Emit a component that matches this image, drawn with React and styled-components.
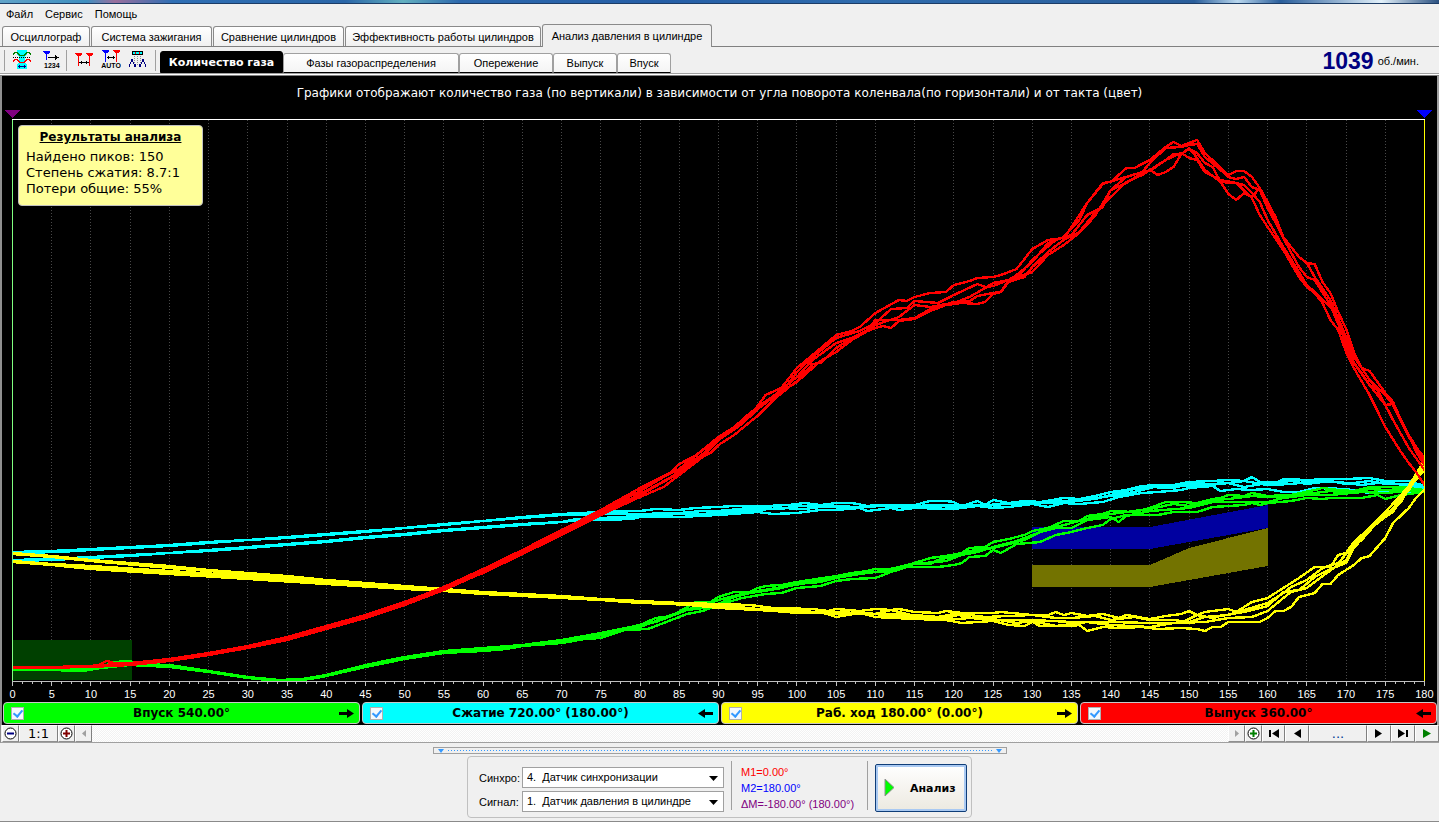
import React, { useState } from "react";
import styled, { createGlobalStyle } from "styled-components";

const GlobalStyle = createGlobalStyle`
  * {
    box-sizing: border-box;
  }
  body {
    margin: 0;
    background: #f0f0f0;
    color: #000;
    font-family: "Liberation Sans", Arial, sans-serif;
    font-size: 11px;
  }
  button, select, input {
    font: inherit;
    color: inherit;
    margin: 0;
  }
  svg {
    display: block;
    flex: none;
  }
`;

const Window = styled.div`
  display: flex;
  flex-direction: column;
  height: 100vh;
  min-height: 560px;
  border-bottom: 1px solid #8a8a8a;
`;

const Glass = styled.div`
  height: 4px;
  flex: none;
  border-bottom: 1px solid #1c3c66;
  background: linear-gradient(
    90deg,
    #5fa3c9 0%,
    #3e8fc0 6%,
    #9a6f9c 8%,
    #2f6fb5 12%,
    #2a66a8 24%,
    #63b0c0 28%,
    #2c68ad 32%,
    #255ea6 46%,
    #2f6cae 60%,
    #2a5e9b 83%,
    #b9d7ee 86%,
    #2a5e9b 89%,
    #e3f1fa 96%,
    #2a5080 100%
  );
`;

const Menu = styled.nav`
  display: flex;
  flex: none;
  gap: 12px;
  height: 20px;
  padding-left: 6px;
`;

const MenuItem = styled.button`
  padding: 0;
  border: 0;
  background: none;
  line-height: 18px;
`;

const Tabs = styled.div`
  display: flex;
  flex: none;
  align-items: flex-end;
  gap: 1px;
  height: 23px;
  padding-left: 2px;
  border-bottom: 1px solid #808080;
`;

const Tab = styled.button`
  width: ${(p) => p.$width}px;
  height: ${(p) => (p.$active ? 23 : 20)}px;
  margin-bottom: ${(p) => (p.$active ? -1 : 0)}px;
  padding: 0;
  border: 1px solid #8a8a8a;
  border-bottom: 0;
  border-radius: 3px 3px 0 0;
  background: ${(p) =>
    p.$active ? "#f0f0f0" : "linear-gradient(#fff, #f0f0f0)"};
  white-space: nowrap;
`;

const Toolbar = styled.div`
  display: flex;
  flex: none;
  height: 29px;
  border-bottom: 1px solid #808080;
  box-shadow: inset 0 -1px #fff, inset 0 -2px #a0a0a0;
`;

const Tools = styled.div`
  display: flex;
  align-items: flex-start;
  width: 160px;
  padding: 3px 0 0 4px;
`;

const Divider = styled.span`
  width: 1px;
  height: ${(p) => p.$height}px;
  background: #a0a0a0;
`;

const Tool = styled.button`
  width: ${(p) => p.$width}px;
  height: 20px;
  padding: 0;
  border: 0;
  background: none;
  display: flex;
  justify-content: center;
`;

const SubTabs = styled.div`
  display: flex;
  align-items: flex-end;
  height: 26px;
`;

const SubTab = styled.button`
  width: ${(p) => p.$width}px;
  height: ${(p) => (p.$active ? 22 : 20)}px;
  padding: 0;
  border: 1px solid ${(p) => (p.$active ? "#000" : "#a0a0a0")};
  border-bottom-color: #000;
  border-radius: 3px 3px 0 0;
  background: ${(p) => (p.$active ? "#000" : "linear-gradient(#fff, #f4f4f4)")};
  color: ${(p) => (p.$active ? "#fff" : "#000")};
  font-family: ${(p) =>
    p.$active ? '"DejaVu Sans", Verdana, sans-serif' : "inherit"};
  font-weight: ${(p) => (p.$active ? "bold" : "normal")};
  white-space: nowrap;
`;

const Rpm = styled.div`
  display: flex;
  align-items: center;
  gap: 4px;
  margin-left: auto;
  padding-right: 20px;
`;

const RpmValue = styled.strong`
  color: #000080;
  font-size: 23px;
`;

const Chart = styled.main`
  display: flex;
  flex: 1 1 0;
  flex-direction: column;
  min-height: 0;
  border-left: 2px solid #909090;
  border-right: 2px solid #a0a0a0;
  background: #000;
  color: #fff;
`;

const ChartTitle = styled.h1`
  flex: none;
  height: 34px;
  margin: 0;
  font: 12px/34px "DejaVu Sans", Verdana, sans-serif;
  text-align: center;
`;

const Markers = styled.div`
  display: flex;
  flex: none;
  justify-content: space-between;
  margin: 0 5px 0 3px;
  padding-bottom: 1px;
`;

const PlotArea = styled.div`
  position: relative;
  display: grid;
  flex: 1 1 0;
  min-height: 0;
  margin: 0 12px 0 10px;
`;

const Plot = styled.svg`
  width: 100%;
  height: 100%;
  min-height: 0;
`;

const Ticks = styled.svg`
  height: 5px;
  width: calc(100% - 22px);
  margin: 0 12px 0 10px;
`;

const Scale = styled.div`
  display: flex;
  flex: none;
  justify-content: space-between;
  height: 15px;
  margin: 0 12px 0 10px;
  line-height: 14px;
`;

const ScaleLabel = styled.span`
  display: flex;
  justify-content: center;
  width: 1px;
`;

const Results = styled.section`
  position: absolute;
  left: 6px;
  top: 6px;
  width: 185px;
  height: 81px;
  padding: 3px 7px;
  border: 1px solid #c0c0c0;
  border-radius: 4px;
  background: #ffff99;
  color: #000;
  font: 13px/16px "DejaVu Sans", Verdana, sans-serif;
  white-space: nowrap;
`;

const ResultsTitle = styled.h2`
  margin: 0 0 4px;
  font-size: 12px;
  line-height: 16px;
  text-align: center;
  text-decoration: underline;
`;

const Strokes = styled.div`
  display: grid;
  flex: none;
  grid-template-columns: repeat(4, 1fr);
  gap: 2px;
  height: 23px;
  padding: 0 0 1px 1px;
`;

const Stroke = styled.label`
  display: flex;
  align-items: center;
  padding: 0 5px 0 7px;
  border: 1px solid #c8c8c8;
  border-radius: 4px;
  background: ${(p) => p.$color};
  color: #000;
  font: bold 12px "DejaVu Sans", Verdana, sans-serif;
`;

const StrokeName = styled.span`
  flex: 1;
  text-align: center;
`;

const Tick = styled.input`
  appearance: none;
  width: 13px;
  height: 13px;
  border: 1px solid #b0b0b0;
  background: #f4f8fc;
  &:checked::before {
    content: "";
    display: block;
    width: 4px;
    height: 7px;
    margin: 0 0 0 3px;
    border: solid #3399ff;
    border-width: 0 2px 2px 0;
    transform: rotate(40deg);
  }
`;

const ScrollRow = styled.div`
  display: flex;
  flex: none;
  height: 18px;
  padding-left: 1px;
  border-left: 1px solid #909090;
  border-bottom: 1px solid #a0a0a0;
  background: #f0f0f0;
`;

const Small = styled.button`
  display: flex;
  align-items: center;
  justify-content: center;
  width: ${(p) => p.$width}px;
  padding: 0;
  border: 1px solid;
  border-color: #fff #808080 #909090 #fff;
  background: #f0f0f0;
  color: ${(p) => p.$color || "#000"};
  font: 13px/15px "DejaVu Sans", Verdana, sans-serif;
`;

const Track = styled.div`
  flex: 1;
  background: repeating-conic-gradient(#fff 0 25%, #f2f2f2 0 50%) 0 0 / 2px 2px;
`;

const Footer = styled.footer`
  display: flex;
  flex: none;
  flex-direction: column;
  align-items: center;
  height: 78px;
  padding-top: 4px;
`;

const Splitter = styled.button`
  display: flex;
  align-items: center;
  justify-content: space-between;
  gap: 4px;
  width: 574px;
  height: 7px;
  padding: 0 4px;
  border: 1px solid #a0a0a0;
  background: #f0f0f0;
`;

const Dots = styled.span`
  flex: 1;
  height: 1px;
  background: repeating-linear-gradient(90deg, #3399ff 0 1px, transparent 1px 3px);
`;

const Panel = styled.form`
  display: flex;
  height: 62px;
  margin-top: 2px;
  padding: 4px 4px 0 11px;
  border: 1px solid #c0c0c0;
  border-radius: 4px;
`;

const Fields = styled.div`
  display: grid;
  grid-template-columns: 43px 202px;
  grid-auto-rows: 21px;
  row-gap: 3px;
  align-items: center;
  margin-right: 7px;
  padding-top: 6px;
`;

const SelectBox = styled.div`
  position: relative;
`;

const Select = styled.select`
  appearance: none;
  display: block;
  width: 100%;
  height: 21px;
  padding: 0 20px 1px 4px;
  border: 1px solid #a0a0a0;
  border-radius: 0;
  background: #fff;
`;

const Caret = styled.svg`
  position: absolute;
  right: 6px;
  top: 9px;
  pointer-events: none;
`;

const Values = styled.div`
  width: 135px;
  padding: 3px 0 0 9px;
  line-height: 16px;
  white-space: nowrap;
`;

const Value = styled.div`
  color: ${(p) => p.$color};
`;

const Analyse = styled.button`
  display: flex;
  align-items: center;
  gap: 14px;
  width: 92px;
  height: 48px;
  margin: 3px 0 0 7px;
  padding: 0 0 0 8px;
  border: 1px solid #0f3d78;
  border-radius: 2px;
  background: linear-gradient(#fff, #ece9e0);
  box-shadow: inset 0 0 0 2px #a9c9f2;
  font-family: "DejaVu Sans", Verdana, sans-serif;
  font-weight: bold;
`;

const tabs = [
  ["Осциллограф", 88],
  ["Система зажигания", 121],
  ["Сравнение цилиндров", 131],
  ["Эффективность работы цилиндров", 196],
  ["Анализ давления в цилиндре", 170],
];

const subTabs = [
  ["Количество газа", 123],
  ["Фазы газораспределения", 176],
  ["Опережение", 94],
  ["Выпуск", 64],
  ["Впуск", 54],
];

const strokes = [
  { name: "Впуск 540.00°", color: "#00ff00", back: false },
  { name: "Сжатие 720.00° (180.00°)", color: "#00ffff", back: true },
  { name: "Раб. ход 180.00° (0.00°)", color: "#ffff00", back: false },
  { name: "Выпуск 360.00°", color: "#ff0000", back: true },
];

// plot scale: crank angle 0..180 over 1412 units, samples counted from TOP down
const TOP = 119;
const HEIGHT = 563;
const WIDTH = 1413;
const toX = (deg) => (deg * 1412) / 180 + 0.5;

// each trace is "angle value" pairs
const cyan = [
  "0 552 5 551 10 549 15 547 20 545 25 542 30 540 35 537 40 534 45 531 50 528 55 524 60 521 65 517 70 514 75 512 80 511 82 509 85 510 87 508 90 507 92 506 96 506 99 505 101 503 103 505 105 503 107 503 109 506 112 505 115 505 117 501 119 501 120 502 121 506 123 501 124 505 125 500 127 503 129 501 131 502 134 498 136 499 138 496 140 492 142 490 144 486 146 485 148 485 150 482 153 481 155 480 157 481 158 477 159 482 161 483 162 479 165 480 168 479 170 479 173 478 175 481 178 481 180 486",
  "0 553 6 552 10 550 15 548 20 546 25 543 30 540 35 538 40 535 45 532 50 528 55 525 60 521 65 518 70 515 75 514 80 514 85 513 88 511 90 511 94 508 98 509 100 506 104 507 107 508 110 505 114 507 117 505 120 505 123 505 125 508 126 504 130 503 133 503 135 501 138 499 140 495 143 489 145 487 148 488 150 484 153 484 155 483 157 487 160 483 163 481 165 484 168 481 170 484 173 481 175 484 178 484 180 488",
  "0 560 5 559 10 557 15 555 20 553 25 550 30 547 35 544 40 541 45 537 50 534 55 530 60 527 65 524 70 522 75 518 80 516 85 514 88 514 91 512 95 510 98 508 101 509 104 506 108 507 111 506 115 508 118 506 121 507 124 505 127 504 130 504 133 501 136 501 139 497 141 495 143 492 146 486 149 486 152 485 154 484 157 481 160 485 163 484 166 481 169 482 172 485 175 482 178 486 180 489",
  "0 561 5 560 10 558 15 556 20 553 25 551 30 548 35 545 40 542 45 538 50 535 55 531 60 528 65 525 70 522 72 519 75 520 79 519 80 517 85 517 90 515 95 512 97 514 100 513 103 510 105 510 108 508 109 511 112 508 113 510 115 508 120 509 123 506 125 508 127 507 130 504 132 507 134 503 136 504 139 502 141 497 144 493 146 492 149 490 150 488 153 486 154 491 156 489 158 490 160 489 162 492 164 492 166 488 170 489 173 493 175 491 178 493 180 490",
];

const green = [
  "0 669 5 669 9 669 11 667 12 665 13 662 15 661 16 664 20 665 25 671 30 677 34 680 37 679 40 675 45 665 50 657 55 651 60 648 65 645 70 640 75 633 80 625 82 618 84 616 86 607 87 602 89 602 90 597 92 592 94 592 95 588 96 586 98 585 100 582 105 576 107 573 109 571 110 569 112 570 113 567 115 563 117 558 119 556 121 553 122 548 124 547 125 542 127 539 129 535 130 531 132 528 134 521 136 521 137 516 139 514 140 511 143 512 145 508 147 502 149 502 151 503 153 499 154 498 155 495 157 496 158 493 160 496 163 495 166 490 167 488 169 490 171 491 173 487 177 487 180 490",
  "0 669 5 670 10 669 13 663 15 662 17 664 20 666 25 671 30 677 34 681 37 680 40 676 45 666 50 658 55 652 60 650 65 646 70 641 75 635 80 627 85 612 88 605 90 600 93 594 95 592 98 588 100 584 103 582 105 578 108 574 110 572 115 564 119 561 121 555 123 552 125 547 128 541 130 535 133 527 135 523 137 519 140 514 143 511 145 509 148 504 150 506 153 500 155 499 158 496 160 497 163 497 165 494 168 491 170 493 173 489 175 490 178 489 180 490",
  "0 670 5 670 9 671 12 667 14 664 16 665 20 666 25 672 30 678 34 680 38 679 40 676 45 667 50 659 55 652 60 650 65 646 70 642 74 637 78 629 82 622 86 610 89 607 92 597 95 591 99 586 102 582 105 577 109 572 112 572 115 563 117 564 118 560 120 556 122 551 125 548 127 544 129 540 131 532 133 528 135 528 137 520 140 517 141 522 142 516 145 511 150 508 153 502 155 502 160 502 162 498 165 495 168 495 172 492 175 493 178 491 180 490",
  "0 669 10 669 15 665 20 667 25 672 30 678 34 681 37 680 40 676 45 667 50 659 55 653 60 651 63 649 65 646 70 643 73 639 75 638 78 630 81 629 83 623 86 614 88 611 90 605 93 598 96 594 98 593 100 588 103 586 105 581 107 579 110 578 112 572 114 567 118 567 120 565 121 563 122 557 124 556 125 550 126 553 128 544 131 542 133 535 135 532 137 528 139 525 140 519 142 515 146 515 148 512 151 512 153 507 157 505 158 503 159 505 160 503 163 501 165 498 167 499 168 498 172 498 174 495 175 499 177 495 180 492",
];

const yellow = [
  "0 553 5 556 10 560 15 563 20 566 25 570 30 573 35 576 40 580 45 583 50 586 55 589 60 592 65 594 70 596 75 599 80 601 85 603 90 604 94 605 97 608 102 609 104 611 105 609 108 611 110 609 112 610 113 609 115 612 118 613 119 611 121 613 123 613 125 613 126 612 130 615 132 615 133 612 134 615 135 613 137 616 139 614 141 618 142 615 145 619 147 616 149 614 150 611 151 615 152 612 155 609 156 612 158 602 160 598 162 588 164 578 166 567 168 567 169 555 170 553 171 542 173 528 175 512 177 495 178 486 180 460",
  "0 554 5 557 10 561 20 568 30 574 40 581 50 587 55 590 60 592 65 595 70 597 75 600 80 602 85 604 90 605 95 609 100 611 105 613 110 614 112 610 115 616 119 618 121 614 124 617 127 616 130 615 133 618 135 618 138 616 140 620 143 617 145 620 148 620 150 622 152 617 155 615 157 610 160 603 162 593 163 587 165 580 167 568 169 563 171 545 172 540 174 522 176 508 177 498 178 490 180 465",
  "0 561 5 564 10 566 20 571 30 576 40 582 50 587 55 590 60 593 70 597 78 601 85 604 90 606 95 609 100 613 105 612 110 614 115 615 118 617 120 614 123 619 126 620 130 620 135 622 140 622 145 623 149 623 151 615 153 618 154 616 157 612 160 606 162 592 164 590 166 577 168 569 170 563 171 548 173 530 175 516 177 502 178 488 180 470",
  "0 562 5 565 10 569 20 574 30 579 40 584 50 589 55 591 60 594 70 598 80 602 90 607 100 611 105 614 108 612 112 616 116 617 119 620 122 618 125 619 128 623 130 621 133 626 137 622 140 625 145 627 148 623 152 622 155 618 158 617 160 611 162 598 163 592 165 588 167 576 169 565 170 560 171 546 173 529 175 517 176 512 177 500 180 466",
  "0 562 10 568 20 573 30 578 40 583 50 588 60 593 70 597 80 603 85 604 90 608 95 610 99 612 100 613 103 612 105 617 108 613 110 617 115 619 119 620 121 623 123 622 125 621 127 625 129 626 130 622 131 626 135 626 136 625 137 631 139 627 141 628 144 627 146 629 149 628 151 629 152 631 153 627 154 627 155 622 159 622 160 618 161 611 162 611 163 607 164 597 166 593 167 584 168 584 169 575 171 565 172 558 173 556 174 547 175 538 176 523 178 508 179 497 180 490",
];

const red = [
  "0 667 5 667 10 666 15 663 20 659 25 653 30 646 35 637 40 626 45 615 50 602 55 587 60 569 65 550 70 530 75 510 80 488 84 472 85 464 87 456 90 437 93 422 95 406 96 395 98 388 100 368 102 355 105 335 107 331 108 327 110 313 113 300 114 301 115 297 117 293 119 292 120 285 122 281 123 278 125 277 126 275 128 269 130 249 132 240 134 238 135 227 137 203 139 183 140 182 142 168 143 168 145 160 147 147 148 142 149 146 150 143 151 140 152 153 155 175 156 171 157 171 158 177 159 188 160 202 161 217 162 237 164 257 165 263 166 264 167 282 168 293 169 312 170 329 171 352 172 368 173 371 174 382 175 393 176 402 177 420 178 435 179 448 180 458",
  "0 667 10 667 15 664 20 660 25 654 30 647 35 638 40 627 45 616 50 603 55 588 60 570 65 551 70 532 75 512 80 491 83 477 85 469 88 450 90 440 93 424 95 406 98 393 100 372 102 357 105 338 108 331 110 323 112 309 114 308 115 301 118 303 120 295 123 284 124 287 125 286 127 280 128 275 130 262 132 243 134 237 136 220 137 203 139 184 141 179 142 177 144 172 145 163 147 148 149 147 150 145 151 144 152 157 154 170 155 177 156 179 157 177 158 187 159 190 160 208 162 237 164 257 165 263 166 277 168 300 170 337 171 357 172 368 173 380 174 388 175 395 176 405 178 437 180 463",
  "0 668 6 668 10 666 11 665 12 661 13 663 15 664 20 660 25 654 30 647 35 639 40 628 45 617 50 604 55 589 60 572 65 553 70 533 75 514 80 494 84 477 86 465 88 454 90 440 92 427 94 413 97 396 100 377 102 360 105 343 107 338 109 330 110 325 113 317 115 305 117 307 119 304 120 303 122 297 124 288 125 283 127 280 128 278 130 260 131 253 133 240 135 235 137 215 139 207 140 190 142 177 144 172 145 171 147 160 148 154 149 154 150 149 151 153 152 163 153 167 154 182 155 194 156 200 157 193 158 197 159 188 160 207 162 238 164 267 165 277 166 280 168 305 170 343 171 363 172 373 173 385 175 405 176 404 177 420 178 435 179 453 180 465",
  "0 668 10 667 12 666 15 665 20 661 25 655 30 648 35 639 40 629 45 618 50 605 55 590 60 571 65 552 70 534 75 515 80 495 85 473 88 457 90 440 93 424 95 409 97 397 100 382 103 361 105 352 107 340 109 331 110 328 111 326 112 328 113 321 115 319 117 311 119 305 121 303 123 304 124 302 125 294 126 292 127 282 129 277 130 267 132 252 134 240 136 232 138 213 140 197 142 182 144 175 145 170 146 175 147 172 148 167 149 154 150 148 151 158 152 170 154 182 156 183 157 185 158 193 159 202 160 220 162 247 164 272 165 285 166 292 168 307 169 317 170 347 171 363 173 385 174 390 175 405 176 420 178 448 180 470",
  "0 668 10 667 15 665 20 661 25 655 30 648 35 640 40 629 45 618 50 605 55 590 59 576 60 573 65 554 70 535 75 515 80 497 83 487 85 475 88 457 89 453 90 445 92 435 94 422 95 416 97 400 99 387 100 381 102 364 103 363 105 348 107 338 109 330 110 320 113 320 115 318 117 309 120 302 122 301 123 296 125 293 126 292 127 280 130 272 132 255 134 245 136 233 138 216 140 190 142 183 144 173 145 170 147 160 149 153 150 158 151 160 152 172 154 180 156 183 158 198 159 215 160 227 162 250 164 277 165 287 166 293 167 303 168 320 169 330 170 352 171 368 173 395 175 427 177 452 178 463 179 473 180 485",
];

const series = [
  { color: "#00ffff", traces: cyan },
  { color: "#00ff00", traces: green },
  { color: "#ffff00", traces: yellow },
  { color: "#ff0000", traces: red },
];

const zones = [
  { color: "#004000", points: "0 640 15.2 640 15.2 680 0 680" },
  { color: "#0000a0", points: "130 527 145 527 160 505 160 528 145 549 130 549" },
  {
    color: "#737300",
    points: "130 565 145 565 150 548 160 528 160 566 145 587 130 587",
  },
];

const toPoints = (trace) => {
  const n = trace.split(" ").map(Number);
  const out = [];
  for (let i = 0; i < n.length; i += 2) {
    out.push(`${toX(n[i]).toFixed(1)},${n[i + 1] - TOP}`);
  }
  return out.join(" ");
};

const gridSteps = Array.from({ length: 35 }, (_, i) => (i + 1) * 5);
const scaleSteps = Array.from({ length: 37 }, (_, i) => i * 5);
const tickSteps = Array.from({ length: 145 }, (_, i) => i * 1.25);

const ScopeIcon = () => (
  <svg width="20" height="20" viewBox="0 0 20 20" fill="none" shapeRendering="crispEdges">
    <path fill="#00ffff" d="M5 0h10v4l-2 3v5l2 3v4H5v-4l2-3V7L5 4z" />
    <path stroke="#008000" d="M1 4.500l2-2h2l3 3h4l3-3h2l2 2" />
    <path stroke="#000" strokeDasharray="1 1" d="M1 7.500h18" />
    <path stroke="#ff0000" d="M1 11.500l2-2h2l3 3h4l3-3h2l2 2" />
    <path stroke="#000080" d="M6 16.500h8M7.500 15v3M12.500 15v3" />
  </svg>
);

const CountIcon = () => (
  <svg width="20" height="20" viewBox="0 0 20 20" shapeRendering="crispEdges">
    <path fill="#0000ff" d="M0 1h7v1L5 4H4v6H3V4H2L0 2z" />
    <path fill="#000" d="M5 7h7V5l4 2.500L12 10V8H5z" />
    <text x="1" y="18" fontSize="7" fontWeight="bold" fontFamily="Liberation Sans, sans-serif">
      1234
    </text>
  </svg>
);

const RangeIcon = () => (
  <svg width="20" height="20" viewBox="0 0 20 20" shapeRendering="crispEdges">
    <path
      fill="#ff0000"
      d="M1 3h7v1L6 6H5v10H4V6H3L1 4zM12 3h7v1l-2 2h-1v10h-1V6h-1l-2-2z"
    />
    <path fill="#000" d="M5 12h10v1H5zM7 11h1v3H7zM12 11h1v3h-1z" />
  </svg>
);

const AutoIcon = () => (
  <svg width="20" height="20" viewBox="0 0 20 20" shapeRendering="crispEdges">
    <path fill="#0000ff" d="M1 0h7v1L6 3H5v9H4V3H3L1 1z" />
    <path fill="#ff0000" d="M12 0h7v1l-2 2h-1v9h-1V3h-1l-2-2z" />
    <path fill="#000" d="M6 7h8v1H6zM7 6h1v3H7zM12 6h1v3h-1z" />
    <text
      x="10"
      y="18"
      textAnchor="middle"
      fontSize="7"
      fontWeight="bold"
      fontFamily="Liberation Sans, sans-serif"
    >
      AUTO
    </text>
  </svg>
);

const PeaksIcon = () => (
  <svg width="20" height="20" viewBox="0 0 20 20" fill="none" shapeRendering="crispEdges">
    <path fill="#00ffff" stroke="#000" d="M4.500 1.500h10v3h-10z" />
    <path stroke="#ff0000" d="M7.500 2v2M11.500 2v2" />
    <path stroke="#909090" strokeDasharray="1 1" d="M6.500 6v10M9.500 6v10M12.500 6v10" />
    <path stroke="#000080" d="M1 17l3-8 3 8 1-3M11 14l1 3 3-8 3 8" />
  </svg>
);

const tools = [
  { label: "Осциллограмма", width: 34, Icon: ScopeIcon },
  { label: "Счёт", width: 27, Icon: CountIcon },
  { label: "Диапазон", width: 34, Icon: RangeIcon },
  { label: "Авто", width: 20, Icon: AutoIcon },
  { label: "Пики", width: 34, Icon: PeaksIcon },
];

const Marker = ({ color }) => (
  <svg width="15" height="8" viewBox="0 0 15 8" shapeRendering="crispEdges">
    <path fill={color} d="M0 0h15L8 8H7z" />
  </svg>
);

const Arrow = ({ back }) => (
  <svg width="15" height="9" viewBox="0 0 15 9">
    <path
      d={back ? "M15 3H7V0L0 4.500 7 9V6h8z" : "M0 3h8V0l7 4.500L8 9V6H0z"}
    />
  </svg>
);

const Zoom = ({ color, plus }) => (
  <svg width="13" height="13" viewBox="0 0 13 13" fill="none">
    <circle cx="6.500" cy="6.500" r="5.500" stroke="#000" fill="#fff" />
    <path
      stroke={color}
      strokeWidth="2"
      d={plus ? "M3 6.500h7M6.500 3v7" : "M3 6.500h7"}
    />
  </svg>
);

const Nav = ({ d, color = "#000" }) => (
  <svg width="12" height="9" viewBox="0 0 12 9" fill={color}>
    <path d={d} />
  </svg>
);

const App = () => {
  const [tab, setTab] = useState(4);
  const [subTab, setSubTab] = useState(0);
  const [shown, setShown] = useState([true, true, true, true]);

  const visible = (color) => shown[strokes.findIndex((s) => s.color === color)];

  return (
    <Window>
      <GlobalStyle />
      <Glass />
      <Menu>
        <MenuItem>Файл</MenuItem>
        <MenuItem>Сервис</MenuItem>
        <MenuItem>Помощь</MenuItem>
      </Menu>
      <Tabs role="tablist">
        {tabs.map(([name, width], i) => (
          <Tab
            key={name}
            role="tab"
            aria-selected={tab === i}
            $width={width}
            $active={tab === i}
            onClick={() => setTab(i)}
          >
            {name}
          </Tab>
        ))}
      </Tabs>
      <Toolbar>
        <Tools>
          <Divider $height={21} />
          {tools.map(({ label, width, Icon }, i) => (
            <React.Fragment key={label}>
              {i === 2 && <Divider $height={21} />}
              <Tool aria-label={label} $width={width}>
                <Icon />
              </Tool>
            </React.Fragment>
          ))}
          <Divider $height={21} />
        </Tools>
        <SubTabs role="tablist">
          {subTabs.map(([name, width], i) => (
            <SubTab
              key={name}
              role="tab"
              aria-selected={subTab === i}
              $width={width}
              $active={subTab === i}
              onClick={() => setSubTab(i)}
            >
              {name}
            </SubTab>
          ))}
        </SubTabs>
        <Rpm>
          <RpmValue>1039</RpmValue>
          <span>об./мин.</span>
        </Rpm>
      </Toolbar>
      <Chart>
        <ChartTitle>
          Графики отображают количество газа (по вертикали) в зависимости от
          угла поворота коленвала(по горизонтали) и от такта (цвет)
        </ChartTitle>
        <Markers>
          <Marker color="#800080" />
          <Marker color="#0000ff" />
        </Markers>
        <PlotArea>
          <Plot
            viewBox={`0 0 ${WIDTH} ${HEIGHT}`}
            preserveAspectRatio="none"
            fill="none"
            shapeRendering="crispEdges"
          >
            {gridSteps.map((deg) => (
              <line
                key={deg}
                x1={Math.floor(toX(deg)) + 0.5}
                x2={Math.floor(toX(deg)) + 0.5}
                y1="1"
                y2={HEIGHT - 1}
                stroke="#484848"
                strokeDasharray="1 2"
              />
            ))}
            {zones.map((z) => (
              <polygon key={z.color} fill={z.color} points={toPoints(z.points)} />
            ))}
            {series
              .filter((s) => visible(s.color))
              .map((s) =>
                s.traces.map((t, i) => (
                  <polyline
                    key={s.color + i}
                    points={toPoints(t)}
                    stroke={s.color}
                    strokeWidth="2.4"
                    strokeLinejoin="round"
                  />
                ))
              )}
            <path stroke="#fff" d={`M0 .5H${WIDTH}`} />
            <path stroke="#c0c0c0" d={`M0 ${HEIGHT - 0.5}H${WIDTH}`} />
            <path stroke="#80ff80" d={`M.5 1V${HEIGHT - 1}`} />
            <path stroke="#ffff00" d={`M${WIDTH - 0.5} 1V${HEIGHT - 1}`} />
          </Plot>
          <Results>
            <ResultsTitle>Результаты анализа</ResultsTitle>
            <div>Найдено пиков: 150</div>
            <div>Степень сжатия: 8.7:1</div>
            <div>Потери общие: 55%</div>
          </Results>
        </PlotArea>
        <Ticks
          viewBox={`0 0 ${WIDTH} 5`}
          preserveAspectRatio="none"
          shapeRendering="crispEdges"
        >
          {tickSteps.map((deg) => (
            <rect
              key={deg}
              x={Math.floor(toX(deg))}
              width="1"
              height={deg % 5 === 0 ? 4 : 2}
              fill="#c0c0c0"
            />
          ))}
        </Ticks>
        <Scale>
          {scaleSteps.map((deg) => (
            <ScaleLabel key={deg}>{deg}</ScaleLabel>
          ))}
        </Scale>
        <Strokes>
          {strokes.map((s, i) => (
            <Stroke key={s.name} $color={s.color}>
              <Tick
                type="checkbox"
                checked={shown[i]}
                onChange={() =>
                  setShown(shown.map((v, n) => (n === i ? !v : v)))
                }
              />
              <StrokeName>{s.name}</StrokeName>
              <Arrow back={s.back} />
            </Stroke>
          ))}
        </Strokes>
      </Chart>
      <ScrollRow>
        <Small $width={17} aria-label="Уменьшить">
          <Zoom color="#000080" />
        </Small>
        <Small $width={39}>1:1</Small>
        <Small $width={17} aria-label="Увеличить">
          <Zoom color="#800000" plus />
        </Small>
        <Small $width={17} aria-label="Влево">
          <Nav color="#a0a0a0" d="M8 1v7L4 4.500z" />
        </Small>
        <Track />
        <Small $width={17} aria-label="Вправо">
          <Nav color="#a0a0a0" d="M4 1v7l4-3.500z" />
        </Small>
        <Small $width={17} aria-label="Добавить">
          <Zoom color="#008000" plus />
        </Small>
        <Small $width={23} aria-label="В начало">
          <Nav d="M1 1h2v7H1zM11 0v9L4 4.500z" />
        </Small>
        <Small $width={24} aria-label="Назад">
          <Nav d="M10 0v9L3 4.500z" />
        </Small>
        <Small $width={58} $color="#003c96">
          ...
        </Small>
        <Small $width={24} aria-label="Вперёд">
          <Nav d="M2 0v9l7-4.500z" />
        </Small>
        <Small $width={24} aria-label="В конец">
          <Nav d="M1 0v9l7-4.500zM9 1h2v7H9z" />
        </Small>
        <Small $width={24} aria-label="Пуск">
          <Nav color="#008000" d="M2 0v9l8-4.500z" />
        </Small>
      </ScrollRow>
      <Footer>
        <Splitter aria-label="Свернуть панель">
          <svg width="6" height="4" viewBox="0 0 6 4" fill="#3399ff">
            <path d="M0 0h6L3 4z" />
          </svg>
          <Dots />
          <svg width="6" height="4" viewBox="0 0 6 4" fill="#3399ff">
            <path d="M0 0h6L3 4z" />
          </svg>
        </Splitter>
        <Panel onSubmit={(e) => e.preventDefault()}>
          <Fields>
            <label htmlFor="sync">Синхро:</label>
            <SelectBox>
              <Select id="sync">
                <option>4.{"\u00a0"} Датчик синхронизации</option>
              </Select>
              <Caret width="9" height="5" viewBox="0 0 9 5">
                <path d="M0 0h9L4.500 5z" />
              </Caret>
            </SelectBox>
            <label htmlFor="signal">Сигнал:</label>
            <SelectBox>
              <Select id="signal">
                <option>1.{"\u00a0"} Датчик давления в цилиндре</option>
              </Select>
              <Caret width="9" height="5" viewBox="0 0 9 5">
                <path d="M0 0h9L4.500 5z" />
              </Caret>
            </SelectBox>
          </Fields>
          <Divider $height={49} />
          <Values>
            <Value $color="#ff0000">M1=0.00°</Value>
            <Value $color="#0000ff">M2=180.00°</Value>
            <Value $color="#800080">ΔM=-180.00° (180.00°)</Value>
          </Values>
          <Divider $height={49} />
          <Analyse>
            <svg width="12" height="18" viewBox="0 0 12 18">
              <path fill="#00ff00" stroke="#909090" d="M1 0v17l9-8.500z" />
            </svg>
            Анализ
          </Analyse>
        </Panel>
      </Footer>
    </Window>
  );
};

export default App;
